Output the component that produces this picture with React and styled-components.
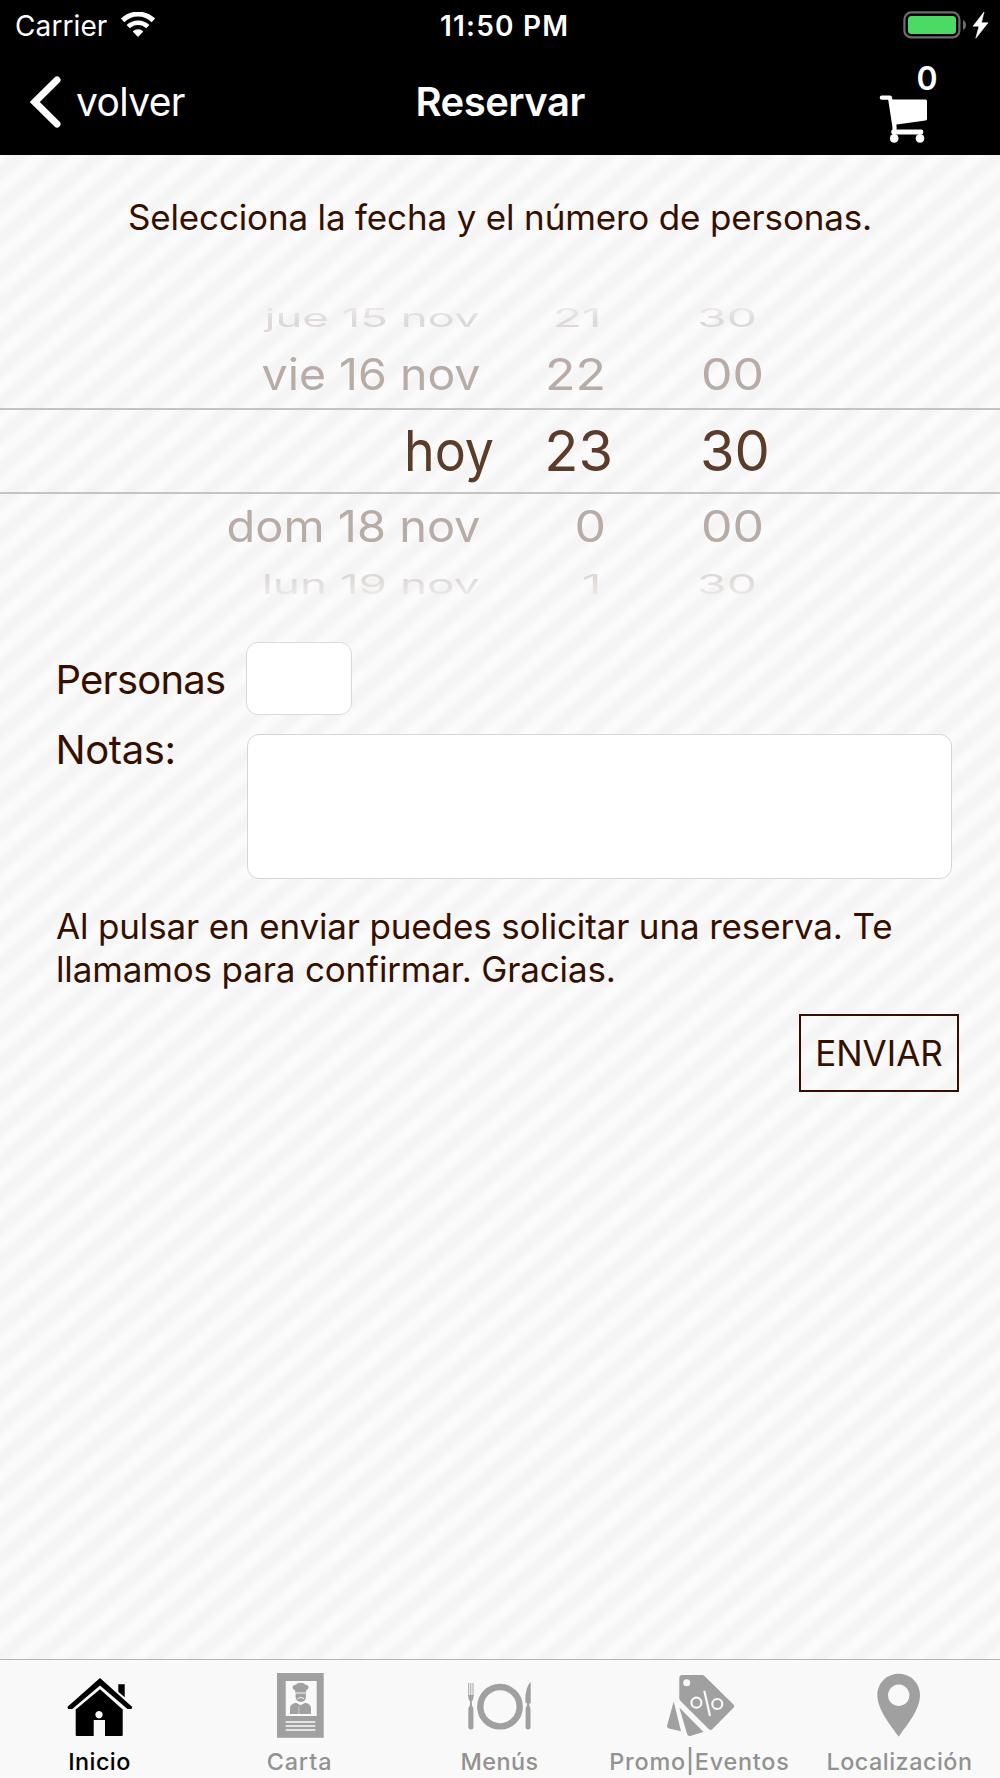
import React from 'react';
import styled, { createGlobalStyle } from 'styled-components';

const GlobalStyle = createGlobalStyle`
  *, *::before, *::after { box-sizing: border-box; }
  body { margin: 0; background: #000; }
`;

const Screen = styled.div`
  display: flex;
  flex-direction: column;
  width: 1000px;
  height: 1778px;
  overflow: hidden;
  font-family: Inter, 'Liberation Sans', sans-serif;
  color: #351000;
`;

const Header = styled.header`
  height: 155px;
  flex: none;
  background: #000;
  color: #fff;
`;

const StatusBar = styled.div`
  display: grid;
  grid-template-columns: 440px 1fr 97px;
  align-items: center;
  height: 51px;
  padding-left: 15px;
  font-size: 28px;
  line-height: 50px;
`;

const Carrier = styled.div`
  display: flex;
  align-items: center;
  gap: 13px;
  letter-spacing: 0.1px;

  svg { margin-bottom: 2px; }
`;

const Clock = styled.time`
  margin-left: -15px;
  font-weight: 600;
  letter-spacing: 1.2px;
`;

const BatteryGroup = styled.div`
  display: flex;
  align-items: center;
  height: 49px;
  align-self: start;
`;

const NavBar = styled.nav`
  display: grid;
  grid-template-columns: 415.5px 1fr 123.5px;
  height: 104px;
`;

const BackButton = styled.button`
  display: flex;
  align-items: center;
  gap: 14px;
  height: 102px;
  padding: 0 0 0 30px;
  border: 0;
  background: none;
  color: inherit;
  font: 400 39px/1 Inter, sans-serif;
  letter-spacing: -0.65px;
`;

const BackText = styled.span`
  padding-bottom: 2px;
`;

const Title = styled.h1`
  margin: 0;
  font-size: 40px;
  font-weight: 600;
  line-height: 101px;
  letter-spacing: -0.5px;
`;

const CartButton = styled.div`
  display: flex;
  flex-direction: column;
  padding-left: 2px;
  padding-top: 9px;
`;

const CartCount = styled.span`
  padding-left: 38px;
  font: 600 32px/37px Inter, sans-serif;
  height: 35px;
`;

const Content = styled.main`
  flex: 1;
  min-height: 0;
  background: repeating-linear-gradient(
    139.8deg,
    #fbfbfb 0, #fafafa 5px,
    #f5f5f5 9.5px, #f4f4f4 13.5px, #f5f5f5 17.5px,
    #fafafa 22.5px, #fbfbfb 25.2px
  );
`;

const Intro = styled.p`
  margin: 0;
  padding-top: 40px;
  font-size: 35px;
  line-height: 44px;
  letter-spacing: -0.16px;
  text-align: center;
`;

const Picker = styled.div`
  display: flex;
  flex-direction: column;
  padding-top: 56px;
`;

const WHEEL = {
  0: { font: 56, color: '#5b3c2a', columns: '494px 119px 1fr', inset: 87 },
  1: { font: 50, color: '#b8aca6', columns: '480.5px 125.5px 1fr', inset: 95 },
  2: { font: 48, color: '#dcd7d5', columns: '479.5px 122px 1fr', inset: 95.5 },
};

const PickerRow = styled.div`
  display: grid;
  grid-template-columns: ${(p) => WHEEL[p.$level].columns};
  height: ${(p) => p.$height}px;
  line-height: ${(p) => p.$line ?? p.$height}px;
  font-size: ${(p) => WHEEL[p.$level].font}px;
  color: ${(p) => WHEEL[p.$level].color};
  white-space: nowrap;
  ${(p) => p.$fade && `mask-image: linear-gradient(${p.$fade}, rgba(0,0,0,.95) 40%, rgba(0,0,0,.3) 78%);`}
  ${(p) => p.$level === 0 && `
    border-top: 2px solid #c4c4c4;
    border-bottom: 2px solid #c4c4c4;
  `}
`;

const DateCell = styled.span`
  text-align: right;
  transform: scale(${(p) => p.$sx}, ${(p) => p.$sy});
  transform-origin: right center;
`;

const HourCell = styled.span`
  text-align: right;
  transform: scaleY(${(p) => p.$sy});
`;

const MinuteCell = styled.span`
  padding-left: ${(p) => p.$inset}px;
  transform: scaleY(${(p) => p.$sy});
`;

const Form = styled.form`
  display: grid;
  grid-template-columns: 190px 1fr;
  row-gap: 19px;
  padding: 32px 48px 0 55.5px;
`;

const Label = styled.label`
  font-size: 40px;
  line-height: 48px;
  letter-spacing: ${(p) => p.$tracking}px;
  ${(p) => (p.$top ? 'margin-top: -8px;' : 'padding-top: 13.5px;')}
`;

const PeopleInput = styled.input`
  width: 106px;
  height: 73px;
  border: 1.5px solid #dadada;
  border-radius: 12px;
  background: #fff;
`;

const NotesInput = styled.textarea`
  display: block;
  width: 705px;
  height: 145px;
  margin-left: 1px;
  border: 1.5px solid #d6d6d6;
  border-radius: 12px;
  background: #fff;
  resize: none;
`;

const Hint = styled.p`
  margin: 26px 90px 0 56px;
  font-size: 35px;
  line-height: 42.5px;
  letter-spacing: -0.15px;
`;

const Actions = styled.div`
  display: flex;
  justify-content: flex-end;
  padding: 24px 41px 0 0;
`;

const SendButton = styled.button`
  width: 160px;
  height: 78px;
  padding: 0;
  border: 2px solid #351000;
  background: none;
  color: #351000;
  font: 400 35px/74px Inter, sans-serif;
`;

const TabBar = styled.footer`
  display: grid;
  grid-template-columns: repeat(5, 200px);
  flex: none;
  height: 119px;
  border-top: 1.5px solid #b4b4b4;
  background: #f9f9f9;
`;

const Tab = styled.div`
  display: flex;
  flex-direction: column;
  align-items: center;
  padding-top: 5px;
  color: ${(p) => (p.$active ? '#000' : '#929292')};

  svg { flex: none; color: ${(p) => (p.$active ? '#000' : '#a0a0a0')}; }
`;

const TabLabel = styled.span`
  margin: 1px 1px 0 0;
  font-size: 23.4px;
  font-weight: 500;
  line-height: 32px;
  letter-spacing: ${(p) => p.$tracking}px;
  white-space: nowrap;
`;

const WifiIcon = () => (
  <svg width="36" height="26" viewBox="0 0 36 26" fill="none" stroke="#fff">
    <path d="M2.600 8.400a22 22 0 0 1 30.800 0" strokeWidth="5" />
    <path d="M8.200 14.700a14 14 0 0 1 19.600 0" strokeWidth="4.600" />
    <path d="M18 25l-5.300-5.500a7.500 7.500 0 0 1 10.600 0z" fill="#fff" stroke="none" />
  </svg>
);

const BatteryIcon = () => (
  <svg width="63" height="28" viewBox="0 0 63 28">
    <rect x="1.400" y="1.400" width="55" height="25" rx="7" fill="none" stroke="#6c6c6c" strokeWidth="2.200" />
    <rect x="5" y="5" width="48" height="18" rx="3.500" fill="#4cd964" />
    <path d="M60 9q3 1.500 3 5t-3 5z" fill="#6c6c6c" />
  </svg>
);

const BoltIcon = () => (
  <svg width="24" height="28" viewBox="0 0 24 28">
    <path d="M18 1L7 15.200h6L9.800 27.200 22 11.800h-6.600z" fill="#fff" stroke="#fff" strokeWidth=".6" />
  </svg>
);

const ChevronIcon = () => (
  <svg width="32" height="52" viewBox="0 0 32 52">
    <path d="M27 4L4.800 26 27 48" fill="none" stroke="#fff" strokeWidth="7" strokeLinecap="round" strokeLinejoin="miter" />
  </svg>
);

const CartIcon = () => (
  <svg width="50" height="50" viewBox="0 0 50 50" fill="#fff">
    <path d="M2.800 2.700h8.200l4.500 29v4" fill="none" stroke="#fff" strokeWidth="4.200" strokeLinecap="round" strokeLinejoin="round" />
    <path d="M11.500 4.500h35q1.500 0 1.500 1.500v18q0 1.300-1.500 1.500L16 29.700z" />
    <path d="M14.500 37h27.500" fill="none" stroke="#fff" strokeWidth="4.800" strokeLinecap="round" />
    <circle cx="15.200" cy="43.400" r="4.300" />
    <circle cx="41" cy="43.400" r="4.300" />
  </svg>
);

const HomeIcon = () => (
  <svg width="80" height="80" viewBox="0 0 80 80" fill="currentColor">
    <path d="M40 13L7.300 42l1 2h4L40 20.500 67.500 44h4l.8-2z" />
    <path d="M58.300 19.300h6.400v13l-6.400-5.500z" />
    <path fillRule="evenodd" d="M40 24.300L15.700 44.600V70q0 1 1 1h17V55H45v16h16.700q1 0 1-1V44.600zM39 46a3.700 3.700 0 1 0 .01 0z" />
  </svg>
);

const CardIcon = () => (
  <svg width="80" height="80" viewBox="0 0 80 80" fill="currentColor">
    <path d="M17 8h46.700v64.700H17z" />
    <path d="M25.700 16h31v35h-31zM25.700 56.200h29.600v1.600H25.700zM25.700 60.200h29.600v1.600H25.700zM25.700 64.200h29.600v1.600H25.700z" fill="#f9f9f9" />
    <path d="M35.200 27.500v-2.300c-4-1-3-5.700.8-5.400 1.500-2.800 8-2.800 9.500 0 3.600-.1 4.400 4.300.7 5.400v2.300z" />
    <path d="M35.600 28.600h10.300v3.700q-.4 4.600-5.100 4.600t-5.200-4.600z" />
    <path d="M37.500 33.600q3.300-2.400 6.600 0" fill="none" stroke="#f9f9f9" strokeWidth="1" />
    <path d="M30 49v-5.500q0-4.700 6-5.700l4.500 2.500 4.700-2.500q5.800 1 5.800 5.700V49z" />
    <path d="M38.800 41v8" stroke="#f9f9f9" strokeWidth=".5" />
  </svg>
);

const PlateIcon = () => (
  <svg width="80" height="80" viewBox="0 0 80 80" fill="currentColor">
    <circle cx="40" cy="41.700" r="19.700" fill="none" stroke="currentColor" strokeWidth="6.400" />
    <path d="M8.700 18v13M10.800 18v13M13 18v13" stroke="currentColor" strokeWidth="1.100" opacity=".85" />
    <path d="M8.200 30h5.400q.2 4.500-1.800 6.200l.3 4.800q1.300 1 1.300 3v18.500q0 2-2.400 2t-2.700-2V44q0-2 1.500-3l.3-4.800Q8 34.500 8.200 30z" />
    <path d="M70.700 16.700v21.800h-1.500l.2 2.500q1.100 1 1.100 3v18.500q0 2-2.500 2t-2.400-2V44q0-2 1.200-3l.3-2.500q-1.800-.4-1.800-2.500 0-14 5.400-19.300z" />
  </svg>
);

const TagsIcon = () => (
  <svg width="80" height="80" viewBox="0 0 80 80" fill="currentColor">
    <path d="M19.300 13q0-3 3-3h19.500q1.700 0 2.900 1.200l28.500 28q1.900 1.900 0 3.800L52.500 64q-1.900 1.900-3.800 0L20.500 36q-1.200-1.200-1.200-2.900z" />
    <circle cx="26.700" cy="17.700" r="3.500" fill="#f9f9f9" />
    <g fill="none" stroke="#f9f9f9" strokeWidth="2.200">
      <circle cx="36.400" cy="37.700" r="5" />
      <circle cx="57.300" cy="39" r="5" />
      <path d="M44.300 25.700L50 51" />
    </g>
    <path d="M19.300 42.500L43.500 67 31 70.800q-3 .8-4-2z" />
    <path d="M13.700 36.500L21 66.200 9 63.500q-2.500-.7-1.800-3.300z" />
  </svg>
);

const PinIcon = () => (
  <svg width="80" height="80" viewBox="0 0 80 80" fill="currentColor">
    <path fillRule="evenodd" d="M38.700 8.700c12 0 21.300 9.300 21.300 21.300 0 15-13.300 30.200-21.300 41.700C30.700 60.200 17.400 45 17.400 30c0-12 9.300-21.300 21.300-21.300zm0 10.900a10.700 10.700 0 1 0 .01 0z" />
  </svg>
);

const rows = [
  { level: 2, height: 44, line: 45, sx: 0.948, sy: 0.535, fade: '0deg', date: 'jue 15 nov', hour: '21', minute: '30' },
  { level: 1, height: 69, line: 71, sx: 0.93, sy: 0.87, date: 'vie 16 nov', hour: '22', minute: '00' },
  { level: 0, height: 86, line: 82, sx: 0.928, sy: 1, date: 'hoy', hour: '23', minute: '30' },
  { level: 1, height: 64, sx: 0.939, sy: 0.87, date: 'dom 18 nov', hour: '0', minute: '00' },
  { level: 2, height: 52, sx: 0.956, sy: 0.57, fade: '180deg', date: 'lun 19 nov', hour: '1', minute: '30' },
];

const tabs = [
  { label: 'Inicio', Icon: HomeIcon, tracking: 0.45, active: true },
  { label: 'Carta', Icon: CardIcon, tracking: 0.88 },
  { label: 'Menús', Icon: PlateIcon, tracking: 0.44 },
  { label: 'Promo|Eventos', Icon: TagsIcon, tracking: 0.79 },
  { label: 'Localización', Icon: PinIcon, tracking: 0.5 },
];

export default function App() {
  return (
    <Screen>
      <GlobalStyle />
      <Header>
        <StatusBar>
          <Carrier>Carrier <WifiIcon /></Carrier>
          <Clock>11:50 PM</Clock>
          <BatteryGroup><BatteryIcon /><BoltIcon /></BatteryGroup>
        </StatusBar>
        <NavBar>
          <BackButton type="button"><ChevronIcon /><BackText>volver</BackText></BackButton>
          <Title>Reservar</Title>
          <CartButton>
            <CartCount>0</CartCount>
            <CartIcon />
          </CartButton>
        </NavBar>
      </Header>
      <Content>
        <Intro>Selecciona la fecha y el número de personas.</Intro>
        <Picker>
          {rows.map((r) => (
            <PickerRow key={r.date} $level={r.level} $height={r.height} $line={r.line} $fade={r.fade}>
              <DateCell $sx={r.sx} $sy={r.sy}>{r.date}</DateCell>
              <HourCell $sy={r.sy}>{r.hour}</HourCell>
              <MinuteCell $sy={r.sy} $inset={WHEEL[r.level].inset}>{r.minute}</MinuteCell>
            </PickerRow>
          ))}
        </Picker>
        <Form>
          <Label htmlFor="personas" $tracking={-0.77}>Personas</Label>
          <PeopleInput id="personas" />
          <Label htmlFor="notas" $tracking={-0.4} $top>Notas:</Label>
          <NotesInput id="notas" />
        </Form>
        <Hint>Al pulsar en enviar puedes solicitar una reserva. Te llamamos para confirmar. Gracias.</Hint>
        <Actions><SendButton type="button">ENVIAR</SendButton></Actions>
      </Content>
      <TabBar>
        {tabs.map(({ label, Icon, tracking, active }) => (
          <Tab key={label} $active={active}>
            <Icon />
            <TabLabel $tracking={tracking}>{label}</TabLabel>
          </Tab>
        ))}
      </TabBar>
    </Screen>
  );
}
